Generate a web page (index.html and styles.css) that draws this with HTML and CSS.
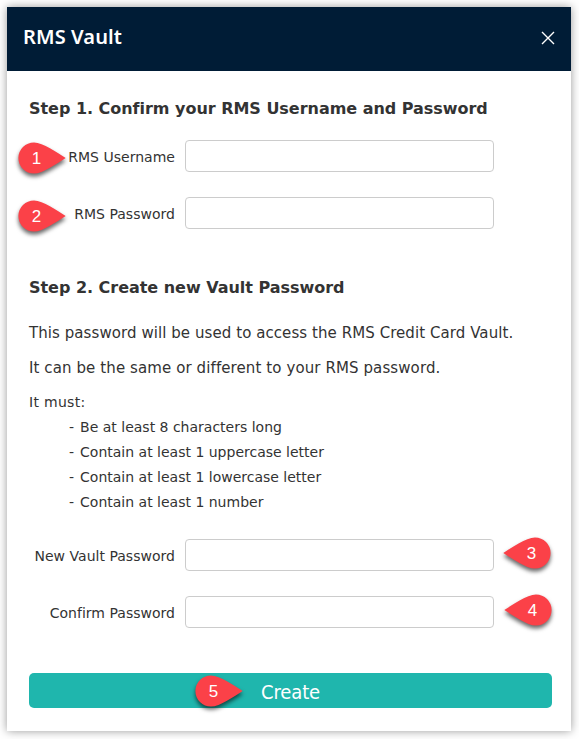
FILE: index.html
```html
<!DOCTYPE html>
<html lang="en">
<head>
    <meta charset="UTF-8">
    <meta name="viewport" content="width=device-width, initial-scale=1.0">
    <title>RMS Vault</title>
    <link rel="stylesheet" href="styles.css">
</head>
<body>
    <svg class="defs" width="0" height="0">
        <symbol id="pin" viewBox="0 0 48 32">
            <path d="M47.7 16 C39 10.5 25 0.4 16 0.4 A15.6 15.6 0 0 0 16 31.6 C25 31.6 39 21.5 47.7 16 Z" fill="#fb4148"/>
        </symbol>
    </svg>

    <div class="dialog">
        <div class="dialog-header">
            <h1>RMS Vault</h1>
            <button type="button" class="close" aria-label="Close">
                <svg width="14" height="14" viewBox="0 0 14 14">
                    <path d="M1 1 L13 13 M13 1 L1 13" stroke="#fff" stroke-width="1.4" fill="none"/>
                </svg>
            </button>
        </div>

        <form class="dialog-body">
            <h2>Step 1. Confirm your RMS Username and Password</h2>
            <div class="form-group">
                <label for="username">RMS Username</label>
                <input type="text" id="username" name="username">
                <div class="marker marker-left"><svg><use href="#pin"/></svg><span>1</span></div>
            </div>
            <div class="form-group">
                <label for="password">RMS Password</label>
                <input type="password" id="password" name="password">
                <div class="marker marker-left marker-two"><svg><use href="#pin"/></svg><span>2</span></div>
            </div>

            <h2 class="step-two">Step 2. Create new Vault Password</h2>
            <p class="intro">This password will be used to access the RMS Credit Card Vault.</p>
            <p class="same">It can be the same or different to your RMS password.</p>
            <p class="must">It must:</p>
            <ul class="rules">
                <li>Be at least 8 characters long</li>
                <li>Contain at least 1 uppercase letter</li>
                <li>Contain at least 1 lowercase letter</li>
                <li>Contain at least 1 number</li>
            </ul>

            <div class="form-group">
                <label for="newPassword">New Vault Password</label>
                <input type="password" id="newPassword" name="newPassword">
                <div class="marker marker-right"><svg><use href="#pin"/></svg><span>3</span></div>
            </div>
            <div class="form-group">
                <label for="confirmPassword">Confirm Password</label>
                <input type="password" id="confirmPassword" name="confirmPassword">
                <div class="marker marker-right marker-four"><svg><use href="#pin"/></svg><span>4</span></div>
            </div>

            <button type="submit" class="create">
                <span>Create</span>
                <span class="marker marker-button"><svg><use href="#pin"/></svg><span>5</span></span>
            </button>
        </form>
    </div>
</body>
</html>
```
FILE: styles.css
```css
* {
    box-sizing: border-box;
}

body {
    margin: 0;
    padding: 7px 8px 8px 7px;
    background-color: #fff;
    color: #333;
    font-family: Verdana, "DejaVu Sans", sans-serif;
    font-size: 14px;
    overflow: hidden;
}

.defs {
    position: absolute;
}

.dialog {
    width: 564px;
    height: 724px;
    background-color: #fff;
    box-shadow: 0 0 9px rgba(0, 0, 0, 0.4);
}

.dialog-header {
    display: flex;
    align-items: center;
    justify-content: space-between;
    height: 64px;
    padding: 0 16px;
    background-color: #001c36;
}

h1 {
    margin: 0 0 4px;
    color: #fff;
    font-family: "Noto Sans", sans-serif;
    font-size: 20px;
    font-weight: 600;
    letter-spacing: 0.1px;
    line-height: 28px;
}

.close {
    display: flex;
    margin-bottom: 2px;
    padding: 0;
    border: 0;
    background: none;
}

.dialog-body {
    padding: 28px 19px 0 22px;
}

h2 {
    margin: 0 0 21px;
    font-size: 16px;
    letter-spacing: -0.03px;
    line-height: 20px;
    white-space: nowrap;
}

.form-group {
    position: relative;
    display: flex;
    align-items: center;
    gap: 10px;
    height: 32px;
    margin-bottom: 25px;
}

label {
    width: 146px;
    padding-top: 2px;
    text-align: right;
    letter-spacing: 0.02px;
    line-height: 20px;
    white-space: nowrap;
}

input {
    width: 309px;
    height: 32px;
    padding: 0 8px;
    border: 1px solid #ccc;
    border-radius: 4px;
    font-size: 14px;
}

.step-two {
    margin: 49px 0 25px;
}

p {
    margin: 0;
    line-height: 20px;
    white-space: nowrap;
}

.intro,
.same {
    margin-bottom: 15px;
    font-size: 15px;
    letter-spacing: 0.07px;
}

.same {
    margin-bottom: 14px;
    letter-spacing: 0.1px;
}

.must {
    letter-spacing: 0.3px;
}

.rules {
    margin: 3px 0 24px;
    padding: 0 0 0 40px;
    list-style: none;
    line-height: 25px;
}

.rules li::before {
    content: "-";
    margin-right: 6px;
}

.create {
    position: relative;
    display: block;
    width: 523px;
    height: 35px;
    margin-top: 45px;
    padding: 3px 0 0;
    border: 0;
    border-radius: 5px;
    background-color: #1fb6ad;
    color: #fff;
    font-family: "DejaVu Sans Condensed", "DejaVu Sans", sans-serif;
    font-size: 20px;
    letter-spacing: -0.1px;
    line-height: 32px;
}

/* numbered callouts lying over the form */
.marker {
    position: absolute;
    width: 48px;
    height: 32px;
    color: #fff;
    font: 17px/34px "Liberation Sans", Arial, sans-serif;
    letter-spacing: 0;
    text-align: center;
}

.marker svg {
    position: absolute;
    top: 0;
    left: 0;
    width: 48px;
    height: 32px;
    overflow: visible;
    filter: drop-shadow(0 3px 2px rgba(0, 0, 0, 0.6));
}

.marker > span {
    position: relative;
}

.marker-left {
    top: 2px;
    left: -11.5px;
    padding-right: 10px;
}

.marker-two {
    top: 3px;
}

.marker-right {
    top: -2px;
    left: 473.5px;
    padding-left: 10px;
}

.marker-right svg {
    transform: scaleX(-1);
}

.marker-four {
    left: 474.5px;
}

.marker-button {
    top: 2px;
    left: 165.5px;
    padding-right: 10px;
}
```
